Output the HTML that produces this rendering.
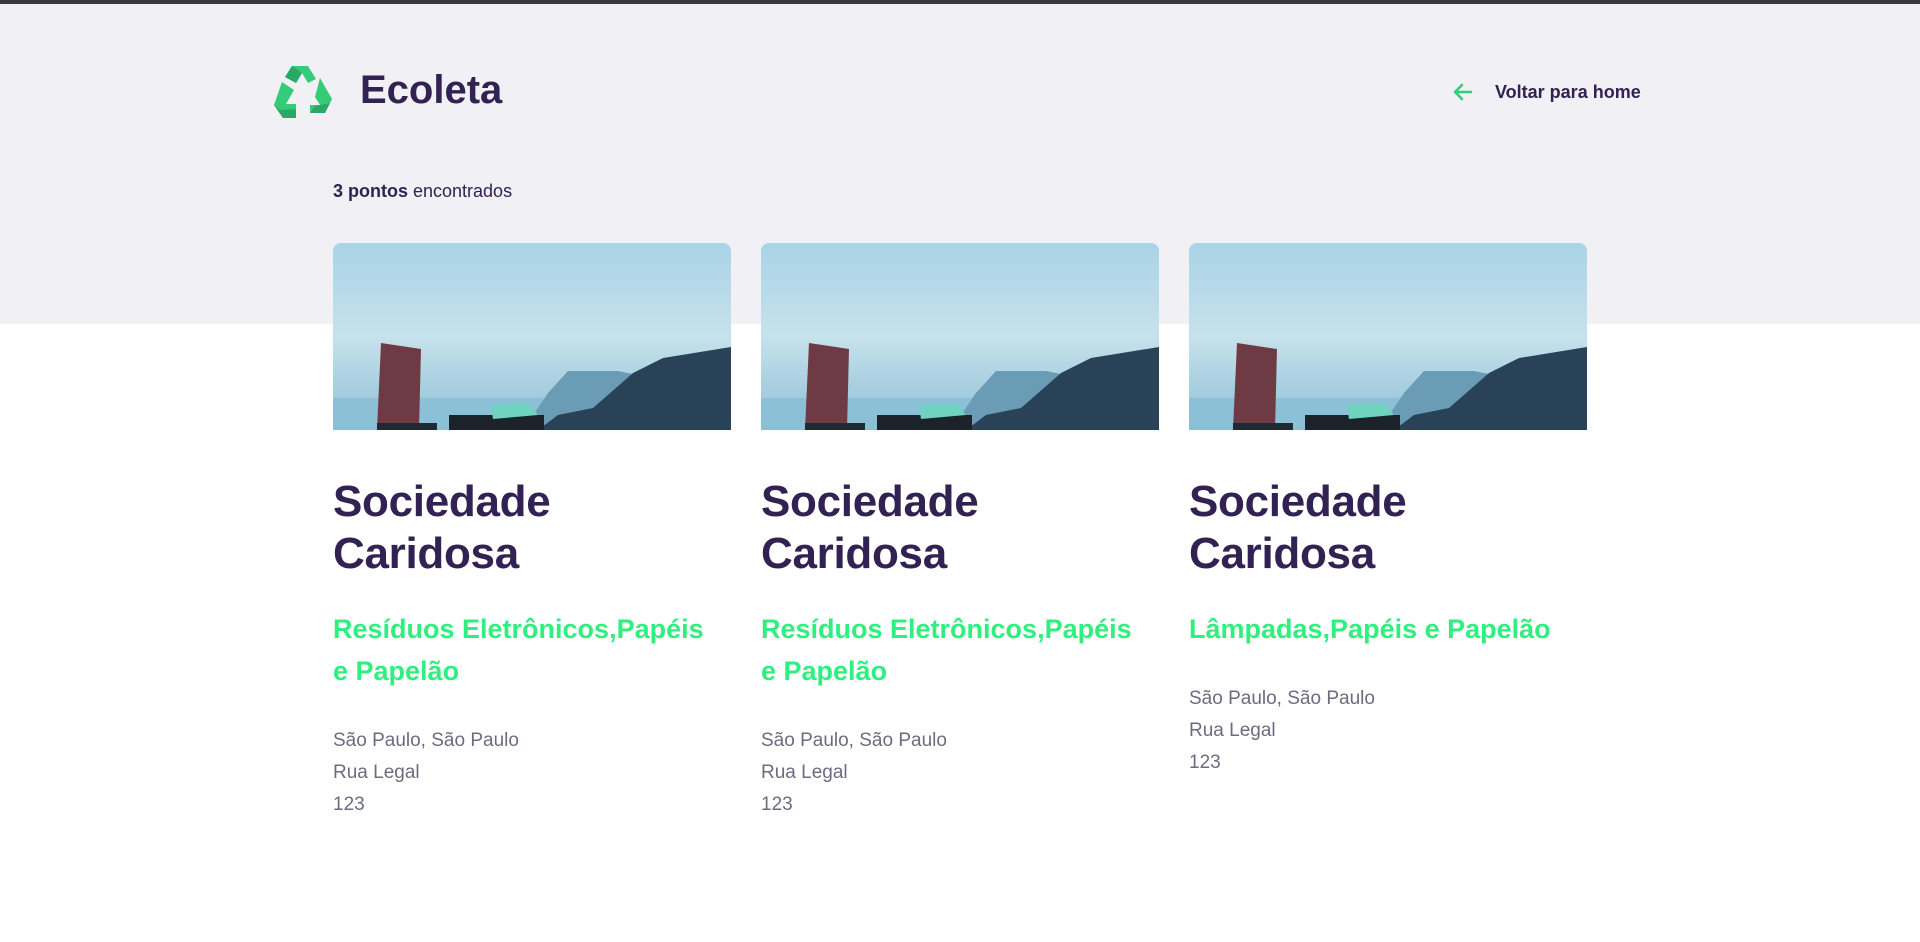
<!DOCTYPE html>
<html><head><meta charset="utf-8"><style>
*{margin:0;padding:0;box-sizing:border-box}
body{width:1920px;height:942px;background:#fff;font-family:"Liberation Sans",sans-serif;position:relative;overflow:hidden;color:#322153}
.topbar{position:absolute;left:0;top:0;width:1920px;height:4px;background:#3a3a3a}
.gray{position:absolute;left:0;top:4px;width:1920px;height:320px;background:#f0f0f5}
.logo{position:absolute;left:272px;top:63px}
.brand{position:absolute;left:360px;top:68px;font-size:40px;font-weight:bold;color:#322153}
.back{position:absolute;left:1451px;top:80px;font-size:18px;font-weight:bold;color:#322153;display:flex;align-items:center}
.back span{margin-left:20px}
.count{position:absolute;left:333px;top:181px;font-size:18px}
.card{position:absolute;top:243px;width:398px}
.img{width:398px;height:187px;border-radius:8px 8px 0 0;overflow:hidden}
.card h2{margin-top:46px;font-size:44px;line-height:52px;font-weight:bold;color:#322153;letter-spacing:-0.3px}
.card h3{margin-top:28px;font-size:27px;line-height:42px;font-weight:bold;color:#2ff07f;white-space:nowrap;letter-spacing:0}
.card p{margin-top:33px;font-size:19px;line-height:32px;color:#6c6c80}
</style></head><body>
<div class="topbar"></div>
<div class="gray"></div>
<svg class="logo" width="62" height="58" viewBox="0 0 62 58">
<path d="M20 3 L36 3 L44 16 L36 20 L30 10 L24 20 L13 14 Z" fill="#34cb79"/>
<path d="M20 3 L30 10 L24 20 L13 14 Z" fill="#2aa865"/>
<path d="M48 15 L60 36 L53 50 L38 50 L38 42 L48 42 L43 34 Z" fill="#34cb79"/>
<path d="M53 50 L38 50 L43 43 L58 40 Z" fill="#2aa865"/>
<path d="M10 19 L22 27 L14 41 L24 41 L24 55 L11 55 L2 42 Z" fill="#34cb79"/>
<path d="M2 42 L11 55 L24 55 L24 46 L8 47 Z" fill="#2aa865"/>
</svg>
<div class="brand">Ecoleta</div>
<div class="back"><svg width="24" height="24" viewBox="0 0 24 24" fill="none" stroke="#34cb79" stroke-width="2.5" stroke-linecap="round" stroke-linejoin="round"><path d="M20 12H4M11 5l-7 7 7 7"/></svg><span>Voltar para home</span></div>
<div class="count"><b>3 pontos</b> encontrados</div>

<svg width="0" height="0" style="position:absolute"><defs>
<linearGradient id="sky" x1="0" y1="0" x2="0" y2="1"><stop offset="0" stop-color="#a9d3e6"/><stop offset="0.5" stop-color="#c6e2ec"/><stop offset="1" stop-color="#8fbfd4"/></linearGradient>
<symbol id="pic" viewBox="0 0 398 187">
<rect width="398" height="187" fill="url(#sky)"/>
<rect y="155" width="398" height="32" fill="#8cc0d6"/>
<path d="M190 187 L215 150 L235 128 L285 128 L320 135 L398 130 L398 187Z" fill="#6a9cb6"/>
<path d="M205 187 L225 172 L260 165 L300 130 L330 115 L398 104 L398 187Z" fill="#2a4257"/>
<path d="M48 100 L88 106 L86 187 L44 187Z" fill="#6e3a44"/>
<rect x="44" y="180" width="60" height="7" fill="#1f2a33"/>
<rect x="116" y="172" width="95" height="15" fill="#1b2229"/>
<path d="M158 162 L195 160 L205 172 L160 176Z" fill="#6fd3c0"/>
</symbol></defs></svg>

<div class="card" style="left:333px"><div class="img"><svg width="398" height="187"><use href="#pic"/></svg></div>
<h2>Sociedade<br>Caridosa</h2><h3>Resíduos Eletrônicos,Papéis<br>e Papelão</h3>
<p>São Paulo, São Paulo<br>Rua Legal<br>123</p></div>
<div class="card" style="left:761px"><div class="img"><svg width="398" height="187"><use href="#pic"/></svg></div>
<h2>Sociedade<br>Caridosa</h2><h3>Resíduos Eletrônicos,Papéis<br>e Papelão</h3>
<p>São Paulo, São Paulo<br>Rua Legal<br>123</p></div>
<div class="card" style="left:1189px"><div class="img"><svg width="398" height="187"><use href="#pic"/></svg></div>
<h2>Sociedade<br>Caridosa</h2><h3>Lâmpadas,Papéis e Papelão</h3>
<p>São Paulo, São Paulo<br>Rua Legal<br>123</p></div>
</body></html>
